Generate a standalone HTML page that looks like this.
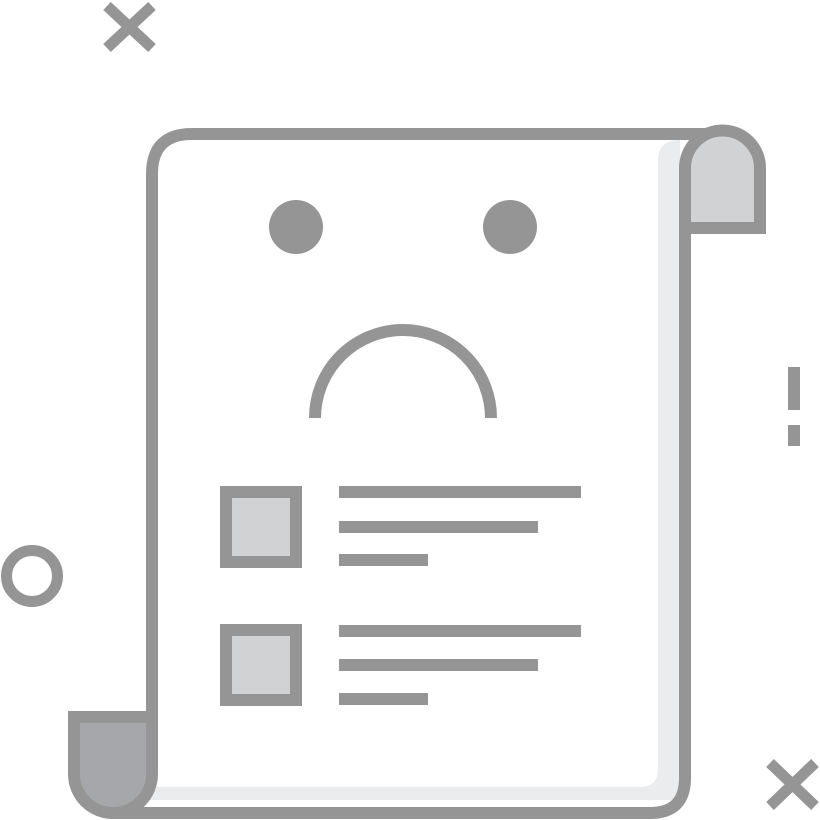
<!DOCTYPE html>
<html><head><style>html,body{margin:0;padding:0;background:#fff;width:820px;height:820px;overflow:hidden}</style></head>
<body>
<svg width="820" height="820" viewBox="0 0 820 820" xmlns="http://www.w3.org/2000/svg">
<g stroke="#959595" fill="none">
<!-- page -->
<path d="M152 717 V174 Q152 134 192 134 H722 L685 168 V778 Q685 813 650 813 H113" fill="#fff" stroke="none"/>
<path d="M658 160 Q658 140 680 140 V790 Q680 800 670 800 H140 V787 H640 Q658 787 658 769 Z" fill="#ebecee" stroke="none"/>
<path d="M152 717 V174 Q152 134 192 134 H722" stroke-width="12"/>
<path d="M685 168 V778 Q685 813 650 813 H113" stroke-width="12"/>
<!-- top curl -->
<path d="M685 228 V168 A37.5 37.5 0 0 1 760 168 V228 Z" fill="#d1d2d4" stroke-width="12"/>
<!-- bottom curl -->
<path d="M74 717 H152 V774 A39 39 0 0 1 74 774 Z" fill="#a6a7aa" stroke-width="12"/>
<!-- frown -->
<path d="M315 418 A88 88 0 0 1 491 418" stroke-width="12"/>
<!-- boxes -->
<rect x="226" y="492" width="70" height="70" fill="#d1d2d4" stroke-width="12"/>
<rect x="226" y="630" width="70" height="70" fill="#d1d2d4" stroke-width="12"/>
<circle cx="32" cy="576" r="25.5" stroke-width="11"/>
<path d="M107 6 L152 48 M152 6 L107 48" stroke-width="11"/>
<path d="M770 763 L815 806 M815 763 L770 806" stroke-width="11"/>
</g>
<g fill="#959595">
<circle cx="296" cy="227" r="27"/>
<circle cx="510" cy="227" r="27"/>
<rect x="339" y="486" width="242" height="12"/>
<rect x="339" y="521" width="199" height="12"/>
<rect x="339" y="554" width="89" height="12"/>
<rect x="339" y="625" width="242" height="12"/>
<rect x="339" y="659" width="199" height="12"/>
<rect x="339" y="693" width="89" height="12"/>
<rect x="788" y="367" width="12" height="43"/>
<rect x="788" y="425" width="12" height="21"/>
</g>
</svg>
</body></html>
